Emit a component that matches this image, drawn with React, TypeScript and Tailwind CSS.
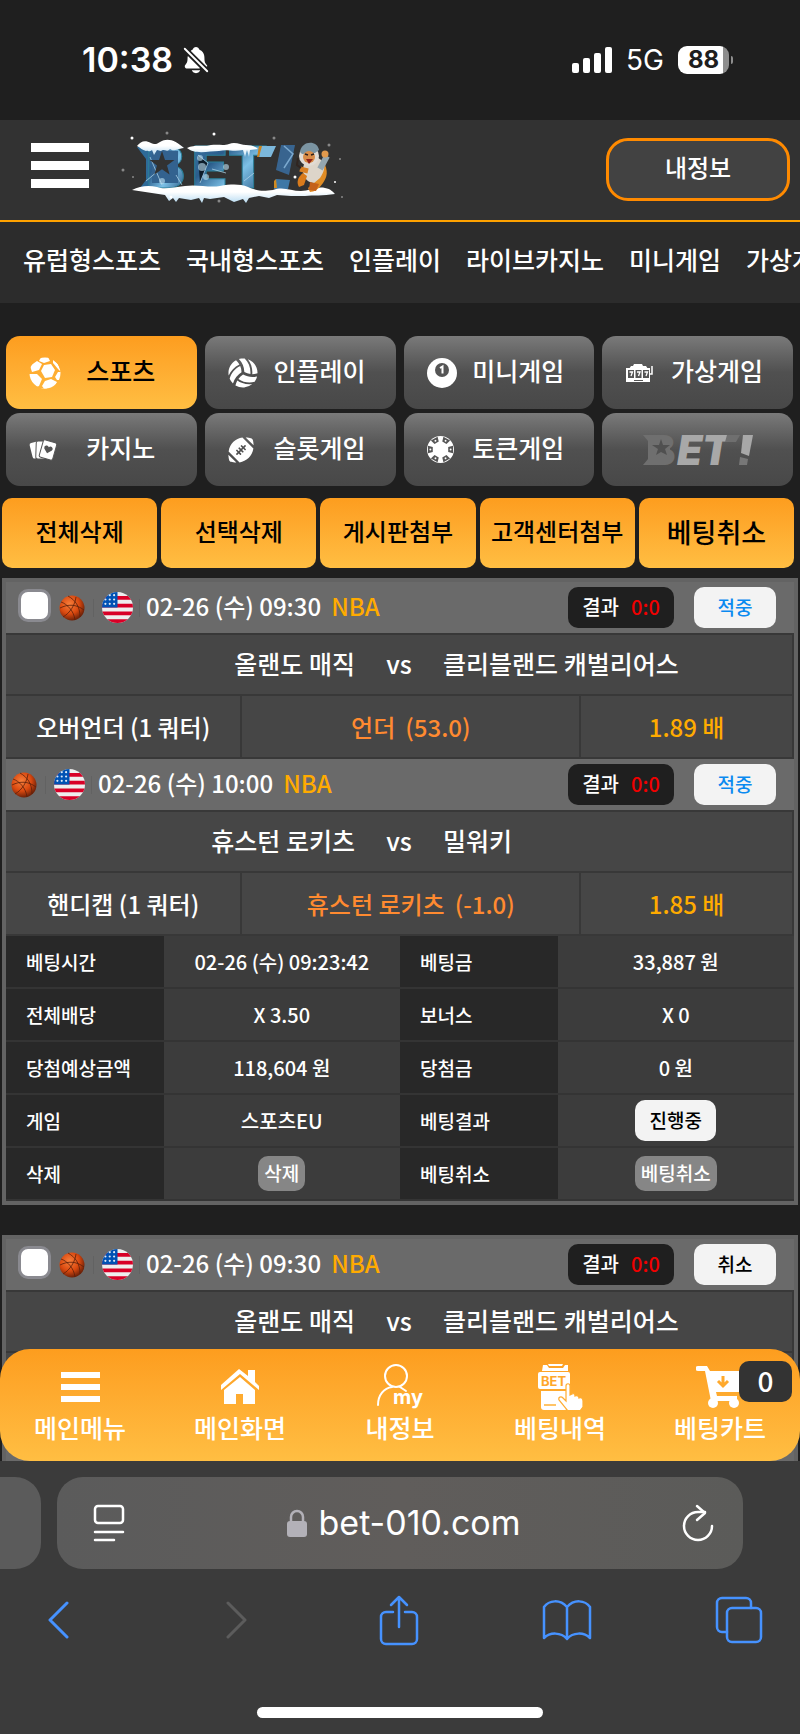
import React from 'react';
import { FaFootballBall, FaVolleyballBall } from 'react-icons/fa';
import { IoNotificationsOff } from 'react-icons/io5';

interface Match {
  id: string;
  time: string;
  league: string;
  score: string;
  status: string;
  won: boolean;
  home: string;
  away: string;
  bet?: { type: string; pick: string; line: string; odds: string };
}

const NAV_ITEMS = ['유럽형스포츠', '국내형스포츠', '인플레이', '라이브카지노', '미니게임', '가상게임'];

const ACTIONS = ['전체삭제', '선택삭제', '게시판첨부', '고객센터첨부', '베팅취소'];

const FIRST_SLIP: Match[] = [
  {
    id: 'a1',
    time: '02-26 (수) 09:30',
    league: 'NBA',
    score: '0:0',
    status: '적중',
    won: true,
    home: '올랜도 매직',
    away: '클리블랜드 캐벌리어스',
    bet: { type: '오버언더 (1 쿼터)', pick: '언더', line: '(53.0)', odds: '1.89 배' },
  },
  {
    id: 'a2',
    time: '02-26 (수) 10:00',
    league: 'NBA',
    score: '0:0',
    status: '적중',
    won: true,
    home: '휴스턴 로키츠',
    away: '밀워키',
    bet: { type: '핸디캡 (1 쿼터)', pick: '휴스턴 로키츠', line: '(-1.0)', odds: '1.85 배' },
  },
];

const SECOND_SLIP: Match[] = [
  {
    id: 'b1',
    time: '02-26 (수) 09:30',
    league: 'NBA',
    score: '0:0',
    status: '취소',
    won: false,
    home: '올랜도 매직',
    away: '클리블랜드 캐벌리어스',
  },
];

/* ---------- icons ---------- */

const SoccerIcon = () => (
  <svg viewBox="0 0 32 32" className="size-[32px]">
    <defs>
      <clipPath id="soccer-round">
        <circle cx="16" cy="16" r="15.500" />
      </clipPath>
    </defs>
    <g clipPath="url(#soccer-round)" fill="#fff">
      <path d="M15 8l7-1 4 6-3 7-7 1-4-7z" />
      <path d="M12 0l7 0 2 4-6 2-5-2z" />
      <path d="M8 4l5 3-3 6-7 2-2-6z" />
      <path d="M0 17h8l5 5-3 7-5 2-5-6z" />
      <path d="M16 24l6-2 6 3-4 8h-8l-3-4z" />
      <path d="M24 3l5 4 3 8-3-3-5-6z" />
      <path d="M29 15l3 0v8l-4 0-2-3z" />
      <path d="M12 31h6v2h-6z" />
    </g>
  </svg>
);

const BilliardIcon = () => (
  <svg viewBox="0 0 30 30" className="size-[30px]">
    <circle cx="15" cy="15" r="15" fill="#fff" />
    <circle cx="15" cy="12" r="7" fill="#555" />
    <path d="M13 10l2.500-1.500v7" fill="none" stroke="#fff" strokeWidth="2" />
  </svg>
);

const SlotIcon = () => (
  <svg viewBox="0 0 28 20" className="w-[28px]">
    <path d="M6 3h2l1-2h8l1 2h3l2 3H4z" fill="#fff" />
    <path d="M1 5h24v14H1z" fill="#fff" />
    <path d="M27 3v8h-2" stroke="#fff" strokeWidth="1.500" fill="none" />
    <g fill="#555">
      <rect x="3" y="7" width="6" height="8" />
      <rect x="10.500" y="7" width="6" height="8" />
      <rect x="18" y="7" width="6" height="8" />
      <rect x="9" y="17" width="9" height="1" />
    </g>
    <g stroke="#fff" strokeWidth="1.300" fill="none">
      <path d="M4.500 9h3l-1.500 4M12 9h3l-1.500 4M19.500 9h3L21 13" />
    </g>
  </svg>
);

const CardsIcon = () => (
  <svg viewBox="0 0 28 22" className="w-[28px]">
    <rect x="2" y="3" width="10" height="16" rx="2" fill="#fff" transform="rotate(-14 7 11)" />
    <rect x="7" y="2" width="10" height="18" rx="2" fill="#fff" stroke="#555" strokeWidth="1" transform="rotate(2 12 11)" />
    <g transform="rotate(16 19 11)">
      <rect x="12" y="2" width="14" height="18" rx="2" fill="#fff" stroke="#555" strokeWidth="1" />
      <path d="M19 14.500l-4-4a2.300 2.300 0 0 1 4-2.300 2.300 2.300 0 0 1 4 2.300z" fill="#555" />
    </g>
  </svg>
);

const ChipIcon = () => (
  <svg viewBox="0 0 28 28" className="w-[27px]">
    <circle cx="14" cy="14" r="14" fill="#fff" />
    {[0, 60, 120, 180, 240, 300].map((deg) => (
      <g key={deg} transform={`rotate(${deg + 30} 14 14)`}>
        <path d="M10 1l1.500 5h5L18 1z" fill="#555" />
        <circle cx="14" cy="3.500" r="1" fill="#fff" />
      </g>
    ))}
  </svg>
);

const GreyLogo = () => (
  <svg viewBox="0 0 112 32" className="w-[112px] overflow-visible" fontFamily="Inter, sans-serif" fontWeight="900" fontSize="41">
    <text x="6" y="31" fill="#6f6f6f">B</text>
    <path d="M10 6h18v20H10z" fill="#6f6f6f" />
    <path d="M1 1h9v30H1l5-6V7z" fill="#6f6f6f" />
    <text x="35 60" y="31" fill="#a8a8a8" fontStyle="italic">ET</text>
    <path d="M85 1h13l-4 7H83z" fill="#6f6f6f" />
    <path d="M101 1h10l-4 21-8-3z" fill="#a8a8a8" />
    <path d="M98 23l8 2-1 6h-8z" fill="#777" />
    <path d="M19 5l2 6 7 0-5 4 2 6-6-3-5 3 2-6-6-4 7 0z" fill="#505050" />
  </svg>
);

const IceLogo = () => (
  <svg viewBox="0 0 226 76" className="w-[226px] overflow-visible">
    <defs>
      <linearGradient id="ice" x1="0" y1="0" x2="1" y2="1">
        <stop offset="0" stopColor="#3f7cab" />
        <stop offset="0.350" stopColor="#2b5d8c" />
        <stop offset="0.600" stopColor="#7cc0e6" />
        <stop offset="1" stopColor="#173e6b" />
      </linearGradient>
      <linearGradient id="snow" x1="0" y1="0" x2="0" y2="1">
        <stop offset="0.400" stopColor="#fff" />
        <stop offset="1" stopColor="#b9dcf2" />
      </linearGradient>
    </defs>
    <path d="M17 16h14v41H20l6-8V28z" fill="#2e6a98" />
    <g fontFamily="Inter, sans-serif" fontWeight="900" fontSize="58" fill="url(#ice)" stroke="#2a7f98" strokeWidth="1">
      <text x="26" y="57">B</text>
      <text x="72 108" y="57">ET</text>
    </g>
    <path d="M32 20h26v32H32z" fill="#33628f" />
    <path d="M142 15h14l-5 11h-12z" fill="#7cb8dc" />
    <path d="M139 15h3l-3 11h-2z" fill="#c98320" />
    <path d="M161 14h14l-6 30-13-5z" fill="#38648f" />
    <path d="M164 15l9 8-9 14" fill="none" stroke="#7ba9cf" strokeWidth="1.500" />
    <path d="M156 48l14 1-2 9h-14z" fill="#3f78a6" />
    <path d="M154 50l2-2 1 9h-3z" fill="#d18b22" />
    <path d="M30 26l12 28M26 50l12-10M78 24l10 8-8 20M124 50l10-8M92 38l14 4M56 44l6 10" stroke="#b7dcf0" strokeWidth="1" opacity="0.700" />
    <g fill="#bfe3f5" opacity="0.600">
      <circle cx="82" cy="36" r="4" />
      <circle cx="86" cy="46" r="3" />
      <circle cx="80" cy="27" r="3" />
      <circle cx="42" cy="50" r="3" />
      <circle cx="106" cy="36" r="3" />
    </g>
    <path d="M42 20l3 9 9.400 0-7.400 5.600 2.600 8.900-7.600-5.200-7.600 5.200 2.600-8.900-7.400-5.600 9.400 0z" fill="#323232" />
    <path d="M17 15c4-5 8-6 14-3 4 2 6 1 9-1 8-5 16-1 24 6-8 1-10 4-14 1-3 4-6-1-9 2l-4-1-3 5-2-5c-4 3-3 0-6 1-4-1-5-3-9-5z" fill="url(#snow)" />
    <path d="M67 17c8-4 16-1 24-3 8-1 12 1 18-1 6-3 12 1 17 1 4 0 9 1 12 4l-8 1-1 7-2-7-2 7-2-7c-10 2-16-1-24 1-10 0-24 4-32-3z" fill="url(#snow)" />
    <path d="M12 59c8-4 16-5 25-3 8 3 16 0 28-1 12-2 24 2 35 0 12-2 20-2 28 1 12 5 16 4 25 3 10-4 18 1 28 1 8 0 16-5 24-3 6 1 8 4 10 6-12 2-22 1-30 2l-14 0-14-1-8 3-10-2-10 2-3 5-3-4-9 3-10-5-14 2-6-1-2 5-3-5-8 2-12-2-3 4-3-4-4 3-4-6z" fill="url(#snow)" />
    {/* mascot */}
    <ellipse cx="194" cy="39" rx="11" ry="13" fill="#ddd5ca" />
    <path d="M200 47c4-6 6-12 3-18 6 12 4 17 0 23-4 6-9 9-13 9l-2-4z" fill="#e08c25" />
    <path d="M183 42c-5 4-7 9-4 14l5-2 3-9z" fill="#d97b1c" />
    <path d="M190 51l9 2-3 7-7-1z" fill="#c4611a" />
    <circle cx="189" cy="25" r="10" fill="#e1dbd4" />
    <path d="M180 21c1-11 17-13 19-2l-4 3-13 1z" fill="#7b94a2" />
    <circle cx="189" cy="26" r="6" fill="#d98c48" />
    <path d="M185 23l3 1M191 24l3-1" stroke="#2d211c" strokeWidth="1.500" />
    <path d="M186 28h7l-4 5z" fill="#8e2118" />
    <path d="M200 38l7-13" stroke="#94a6b0" strokeWidth="6" />
    <circle cx="205" cy="23" r="3.500" fill="#e29a4d" />
    <path d="M180 38l8 2" stroke="#d98126" strokeWidth="5" />
    <path d="M178 27l-1 7 4 3" stroke="#302520" strokeWidth="2" fill="none" />
    <g fill="#fff">
      <circle cx="12" cy="7" r="1.500" />
      <circle cx="94" cy="3" r="1.500" />
      <circle cx="51" cy="66" r="1.500" />
      <circle cx="215" cy="51" r="1" />
      <circle cx="175" cy="46" r="1.500" />
    </g>
    <g fill="#888">
      <circle cx="3" cy="39" r="1.500" />
      <circle cx="47" cy="2" r="1.500" />
      <circle cx="154" cy="7" r="1.500" />
      <circle cx="209" cy="14" r="1.500" />
      <circle cx="220" cy="28" r="1" />
      <circle cx="99" cy="70" r="1.500" />
      <circle cx="222" cy="66" r="1" />
      <circle cx="13" cy="46" r="1" />
    </g>
  </svg>
);

const Basketball = () => (
  <svg viewBox="0 0 26 26" className="size-[26px] shrink-0">
    <defs>
      <radialGradient id="ball" cx="0.400" cy="0.350" r="0.650">
        <stop offset="0" stopColor="#f8803c" />
        <stop offset="0.600" stopColor="#d9480f" />
        <stop offset="1" stopColor="#6f2208" />
      </radialGradient>
    </defs>
    <circle cx="13" cy="13" r="12.500" fill="url(#ball)" />
    <path d="M1 13c8-4 16-4 24 2M9 1c7 4 12 10 12 21M17 2C16 10 11 18 4 22M2 7c6 2 13 9 14 18" fill="none" stroke="#5a1f0a" strokeWidth="0.800" />
  </svg>
);

const UsFlag = () => (
  <svg viewBox="0 0 512 512" className="size-[31px] shrink-0">
    <defs>
      <clipPath id="flag-round">
        <circle cx="256" cy="256" r="256" />
      </clipPath>
    </defs>
    <g clipPath="url(#flag-round)">
      <path d="M0 0h512v512H0z" fill="#eee" />
      <path d="M0 64h512v64H0zM0 192h512v64H0zM0 320h512v64H0zM0 448h512v64H0z" fill="#d80027" />
      <path d="M0 0h256v256H0z" fill="#0052b4" />
      <g fill="#dce8f6">
        {[40, 112, 184].map((y) =>
          [40, 112, 184].map((x) => <circle key={`${x}-${y}`} cx={x + 16} cy={y + 12} r="18" />)
        )}
      </g>
    </g>
  </svg>
);

const HomeIcon = () => (
  <svg viewBox="0 0 38 36" className="w-[38px]" fill="#fff">
    <path d="M27 1h7v12l4 4v4L19 5 0 21v-5L18 0l9 7z" />
    <path d="M3 21L19 8l15 13v14H22V25h-7v10H3z" />
  </svg>
);

const MyIcon = () => (
  <svg viewBox="0 0 48 48" className="w-[48px] overflow-visible" fill="none" stroke="#fff" strokeWidth="2" strokeLinecap="round">
    <circle cx="20" cy="13" r="11" />
    <path d="M2 42c0-10 6-17 14-18M24 24l6 4" />
    <text x="17" y="41" fill="#fff" stroke="none" fontFamily="Inter, sans-serif" fontWeight="700" fontSize="20">my</text>
  </svg>
);

const BetIcon = () => (
  <svg viewBox="0 0 46 46" className="w-[46px]">
    <path d="M6 1h4l2 3h14l2-3h3v6H5z" fill="#fff" />
    <path d="M11 0h15l-1 2H12z" fill="#fff" />
    <rect x="1" y="8" width="32" height="17" rx="2" fill="#fff" />
    <text x="4" y="22" fill="#ffa72a" fontFamily="Inter, sans-serif" fontWeight="700" fontSize="13">BET</text>
    <path d="M4 27h26v17a2 2 0 0 1-2 2H7a3 3 0 0 1-3-3z" fill="#fff" />
    <path d="M7 41h12" stroke="#ffb034" strokeWidth="1.500" />
    <path
      d="M29 22c0-3 4-3 4 0v9l2-1c2-1 3 0 3 2 2-1 4 0 4 2 2-1 4 0 4 3v6l-3 4H31l-9-11c-1-3 2-4 4-2l3 3z"
      fill="#fff"
      stroke="#ffac30"
      strokeWidth="1.200"
    />
  </svg>
);

const CartIcon = () => (
  <svg viewBox="0 0 48 44" className="w-[48px]" fill="#fff">
    <path d="M2 1h9l3 5h34l-4 21H20l1 4h20v5H15L9 6H2a2 2 0 0 1 0-5z" />
    <circle cx="17" cy="38" r="5" />
    <circle cx="38" cy="38" r="5" />
    <path d="M27 11v8M22 16l5 5 5-5" fill="none" stroke="#ffa92c" strokeWidth="3" />
  </svg>
);

const MenuBars = ({ className }: { className: string }) => (
  <svg viewBox="0 0 58 45" className={className} fill="#fff" preserveAspectRatio="none">
    <path d="M0 0h58v9H0zM0 18h58v9H0zM0 36h58v9H0z" />
  </svg>
);

/* ---------- page parts ---------- */

const StatusBar = () => (
  <div className="flex h-[120px] shrink-0 items-center justify-between bg-[#1f1f1f] pl-[82px] pr-[67px] font-['Inter',sans-serif] font-normal">
    <div className="flex items-center gap-2">
      <span className="text-[34px] leading-none font-semibold">10:38</span>
      <IoNotificationsOff className="size-[30px]" />
    </div>
    <div className="flex items-center gap-3.5">
      <svg viewBox="0 0 40 26" className="w-[40px]" fill="#fff">
        <rect x="0" y="16" width="7" height="10" rx="2" />
        <rect x="11" y="11" width="7" height="15" rx="2" />
        <rect x="22" y="6" width="7" height="20" rx="2" />
        <rect x="33" y="0" width="7" height="26" rx="2" />
      </svg>
      <span className="text-[28px] leading-none">5G</span>
      <div className="flex items-center gap-0.5">
        <div className="flex h-7 w-[51px] items-center justify-center rounded-[9px] bg-linear-to-r from-white from-88% to-[#8e8e8e] to-88% text-2xl leading-none font-bold text-[#1f1f1f]">
          88
        </div>
        <div className="h-2 w-0.5 rounded-r bg-[#8e8e8e]" />
      </div>
    </div>
  </div>
);

const Header = () => (
  <header className="flex h-[102px] items-center justify-between border-b-2 border-[#ffa200] bg-[#323232] pb-0.5 pl-[31px] pr-2.5">
    <div className="flex items-center gap-[31px]">
      <button aria-label="메뉴" className="pb-2">
        <MenuBars className="h-[45px] w-[58px]" />
      </button>
      <a href="#" aria-label="BET!">
        <IceLogo />
      </a>
    </div>
    <button className="h-[63px] w-[184px] rounded-[22px] border-3 border-[#ff8a00] bg-[#424242] pb-1 text-2xl leading-none">내정보</button>
  </header>
);

const categoryBase = 'grid h-[73px] grid-cols-[30px_1fr] items-center rounded-[14px] pl-[23px] pr-3.5 text-[25px] leading-none';
const categoryGrey = 'bg-linear-to-b from-[#7a7a7a] via-[#505050] via-50% to-[#484848]';
const orange = 'bg-linear-to-b from-[#fd9d1e] to-[#ffbe42]';

const CATEGORIES = [
  { label: '스포츠', icon: <SoccerIcon />, active: true },
  { label: '인플레이', icon: <FaVolleyballBall className="size-[30px]" /> },
  { label: '미니게임', icon: <BilliardIcon /> },
  { label: '가상게임', icon: <SlotIcon /> },
  { label: '카지노', icon: <CardsIcon /> },
  { label: '슬롯게임', icon: <FaFootballBall className="size-[26px]" /> },
  { label: '토큰게임', icon: <ChipIcon /> },
];

const Categories = () => (
  <div className="grid grid-cols-4 gap-x-2 gap-y-1 pr-[7px] pl-1.5">
    {CATEGORIES.map((c) => (
      <button key={c.label} className={`${categoryBase} ${c.active ? `${orange} text-black` : categoryGrey}`}>
        {c.icon}
        <span className="pb-1">{c.label}</span>
      </button>
    ))}
    <button aria-label="BET!" className={`flex h-[73px] items-center justify-center rounded-[14px] ${categoryGrey}`}>
      <GreyLogo />
    </button>
  </div>
);

const MatchBlock = ({ match, selectable }: { match: Match; selectable: boolean }) => (
  <div>
    <div className={`flex h-[53px] items-center border-b-2 border-[#383838] bg-[#6a6a6a] pr-[18px] ${selectable ? 'pl-3' : 'pl-[5px]'}`}>
      {selectable && (
        <input
          type="checkbox"
          aria-label={`${match.home} 선택`}
          className="mr-2 mb-1 size-[33px] appearance-none rounded-[10px] border-3 border-[#8a8a90] bg-white"
        />
      )}
      <div className="flex items-center">
        <Basketball />
        <span className="mx-2 h-[18px] w-px bg-[#626262]" />
        <UsFlag />
        <span className="mx-1.5 h-[18px] w-px bg-[#626262]" />
        <span className="flex gap-2.5 pb-1 text-2xl leading-none">
          {match.time}
          <span className="text-[#ffab00]">{match.league}</span>
        </span>
      </div>
      <div className="ml-auto flex items-center gap-5 leading-none">
        <div className="flex h-[41px] w-[106px] items-center justify-center gap-3 rounded-[10px] bg-[#1f1f1f] pb-0.5 text-xl leading-none">
          결과 <span className="text-[#f00000]">{match.score}</span>
        </div>
        <div
          className={`flex h-[41px] w-[82px] items-center justify-center rounded-[10px] bg-[#f3f3f3] pb-0.5 text-[19px] font-medium ${
            match.won ? 'text-[#0a8af0]' : 'text-black'
          }`}
        >
          {match.status}
        </div>
      </div>
    </div>
    <div className="grid h-[61px] grid-cols-[1fr_88px_1fr] items-center border-r-2 border-b-2 border-[#383838] bg-[#464646] pb-0.5 text-[25px] leading-none">
      <span className="text-right">{match.home}</span>
      <span className="text-center">vs</span>
      <span>{match.away}</span>
    </div>
    <div className="grid h-[63px] grid-cols-[30fr_43fr_27fr] border-b-2 border-[#383838] bg-[#464646] text-2xl leading-none">
      <div className="flex items-center justify-center border-r-2 border-[#383838]">{match.bet?.type}</div>
      <div className="flex items-center justify-center gap-2.5 border-r-2 border-[#383838] text-[#ff8a30]">
        <span>{match.bet?.pick}</span>
        <span>{match.bet?.line}</span>
      </div>
      <div className="flex items-center justify-center border-r-2 border-[#383838] text-[#ffab00]">{match.bet?.odds}</div>
    </div>
  </div>
);

const greyPill = 'h-[35px] rounded-[10px] bg-[#868686] px-1.5 pb-0.5 align-middle text-[19px] leading-none';

const SlipDetails = () => {
  const rows: [string, React.ReactNode, string, React.ReactNode][] = [
    ['베팅시간', '02-26 (수) 09:23:42', '베팅금', '33,887 원'],
    ['전체배당', 'X 3.50', '보너스', 'X 0'],
    ['당첨예상금액', '118,604 원', '당첨금', '0 원'],
    [
      '게임',
      '스포츠EU',
      '베팅결과',
      <span className="inline-flex h-[41px] w-[81px] items-center justify-center rounded-[10px] bg-[#f3f3f3] pb-0.5 align-middle text-[19px] text-black">
        진행중
      </span>,
    ],
    ['삭제', <button className={greyPill}>삭제</button>, '베팅취소', <button className={greyPill}>베팅취소</button>],
  ];

  return (
    <table className="w-full table-fixed border-separate border-spacing-0 text-xl leading-none">
      <colgroup>
        <col className="w-[20%]" />
        <col className="w-[30%]" />
        <col className="w-[20%]" />
        <col className="w-[30%]" />
      </colgroup>
      <tbody>
        {rows.map(([leftLabel, leftValue, rightLabel, rightValue]) => (
          <tr key={leftLabel} className="h-[53px] [&>*]:border-b-2 [&>*]:border-[#343434] [&>*]:p-0">
            <th className="bg-[#282828] text-left text-[19px] font-medium">
              <span className="pl-5">{leftLabel}</span>
            </th>
            <td className="bg-[#3c3c3c] text-center">{leftValue}</td>
            <th className="bg-[#282828] text-left text-[19px] font-medium">
              <span className="pl-5">{rightLabel}</span>
            </th>
            <td className="bg-[#3c3c3c] text-center">{rightValue}</td>
          </tr>
        ))}
      </tbody>
    </table>
  );
};

const TabBar = () => {
  const tabs = [
    { label: '메인메뉴', icon: <MenuBars className="h-[30px] w-[39px]" /> },
    { label: '메인화면', icon: <HomeIcon /> },
    { label: '내정보', icon: <MyIcon /> },
    { label: '베팅내역', icon: <BetIcon /> },
    { label: '베팅카트', icon: <CartIcon />, badge: '0' },
  ];

  return (
    <nav className={`absolute inset-x-0 bottom-0 grid h-28 grid-cols-5 rounded-[30px] ${orange}`}>
      {tabs.map((tab) => (
        <a key={tab.label} href="#" className="relative flex flex-col items-center pt-3.5 text-[25px] leading-none">
          <span className="flex h-12 items-center">{tab.icon}</span>
          <span className="pt-1">{tab.label}</span>
          {tab.badge && (
            <span className="absolute top-3 right-2 flex h-[41px] w-[53px] items-center justify-center rounded-[10px] bg-[#333] pb-1 text-[28px] leading-none">
              {tab.badge}
            </span>
          )}
        </a>
      ))}
    </nav>
  );
};

const stroke = { fill: 'none', strokeWidth: 3, strokeLinecap: 'round', strokeLinejoin: 'round' } as const;

const BrowserBar = () => (
  <footer className="shrink-0 bg-[#3b3b3b] pt-4 pb-4 font-['Inter',sans-serif] font-normal">
    <div className="flex items-center gap-4 pr-[57px]">
      <div className="h-[92px] w-[41px] rounded-r-[26px] bg-[#5b5b5b]" />
      <div className="flex h-[92px] flex-1 items-center justify-between rounded-[26px] bg-linear-to-r from-[#5b5b5b] via-[#605d5b] to-[#5b5b59] pr-[29px] pl-9">
        <button aria-label="읽기 도구">
          <svg viewBox="0 0 32 38" className="w-[32px]" stroke="#fff" {...stroke} strokeWidth="2.500">
            <rect x="2" y="2" width="28" height="17" rx="3" />
            <path d="M2 28h28M2 36h19" />
          </svg>
        </button>
        <div className="flex items-center gap-3 text-[34px] leading-none">
          <svg viewBox="0 0 20 28" className="w-[20px]">
            <rect x="0" y="12" width="20" height="16" rx="3" fill="#b3b1b8" />
            <path d="M4 12V8a6 6 0 0 1 12 0v4" fill="none" stroke="#b3b1b8" strokeWidth="2.500" />
          </svg>
          <span>bet-010.com</span>
        </div>
        <button aria-label="새로고침">
          <svg viewBox="0 0 32 38" className="w-[32px]" stroke="#fff" {...stroke} strokeWidth="2.500">
            <path d="M30 22A14 14 0 1 1 16 8h7" />
            <path d="M15 2l8 7-8 7" />
          </svg>
        </button>
      </div>
    </div>
    <div className="mt-5 flex h-[62px] items-center justify-between pr-[37px] pl-12 text-[#4692ff]">
      <button aria-label="뒤로">
        <svg viewBox="0 0 22 38" className="w-[22px]" stroke="currentColor" {...stroke}>
          <path d="M19 2L2 19l17 17" />
        </svg>
      </button>
      <button aria-label="앞으로" className="ml-8 text-[#5c5c5c]">
        <svg viewBox="0 0 22 38" className="w-[22px]" stroke="currentColor" {...stroke}>
          <path d="M3 2l17 17L3 36" />
        </svg>
      </button>
      <button aria-label="공유" className="ml-2">
        <svg viewBox="0 0 40 52" className="w-[40px]" stroke="currentColor" {...stroke} strokeWidth="2.500">
          <path d="M14 18H7a5 5 0 0 0-5 5v22a5 5 0 0 0 5 5h26a5 5 0 0 0 5-5V23a5 5 0 0 0-5-5h-7M20 33V3M12 11l8-8 8 8" />
        </svg>
      </button>
      <button aria-label="책갈피">
        <svg viewBox="0 0 50 42" className="w-[50px]" stroke="currentColor" {...stroke} strokeWidth="2.500">
          <path d="M25 8C18 0 7 1 2 8v31c6-6 17-6 23 1 6-7 17-7 23-1V8c-5-7-16-8-23 0zM25 8v31" />
        </svg>
      </button>
      <button aria-label="탭">
        <svg viewBox="0 0 48 48" className="w-[48px]" stroke="currentColor" {...stroke} strokeWidth="2.500">
          <path d="M12 36H7a5 5 0 0 1-5-5V7a5 5 0 0 1 5-5h24a5 5 0 0 1 5 5v5" />
          <rect x="12" y="12" width="34" height="34" rx="5" />
        </svg>
      </button>
    </div>
    <div className="mx-auto mt-14 h-[11px] w-[286px] rounded-full bg-white" />
  </footer>
);

export default function App() {
  return (
    <div className="flex h-screen flex-col overflow-hidden bg-[#1f1f1f] font-['Noto_Sans_CJK_KR',sans-serif] font-medium text-white">
      <StatusBar />
      <main className="relative min-h-0 flex-1 overflow-hidden">
        <Header />
        <nav className="flex h-[81px] items-center gap-[25px] overflow-hidden bg-[#2c2c2c] pb-1.5 pl-[23px] text-[25px] leading-none whitespace-nowrap">
          {NAV_ITEMS.map((item) => (
            <a key={item} href="#">
              {item}
            </a>
          ))}
        </nav>

        <div className="pt-[33px]">
          <Categories />
          <div className="mt-3 grid grid-cols-5 gap-1 pr-1.5 pl-0.5">
            {ACTIONS.map((action) => (
              <button
                key={action}
                className={`h-[70px] rounded-[10px] pb-1 leading-none whitespace-nowrap text-black ${orange} ${
                  action === '베팅취소' ? 'text-[27px]' : 'text-2xl'
                }`}
              >
                {action}
              </button>
            ))}
          </div>
        </div>

        <section className="mx-0.5 mt-2.5 border-4 border-[#636363]">
          {FIRST_SLIP.map((m, i) => (
            <MatchBlock key={m.id} match={m} selectable={i === 0} />
          ))}
          <SlipDetails />
        </section>

        <section className="mx-0.5 mt-[30px] border-4 border-[#636363] bg-[#6a6a6a] pb-16">
          {SECOND_SLIP.map((m, i) => (
            <MatchBlock key={m.id} match={m} selectable={i === 0} />
          ))}
        </section>

        <TabBar />
      </main>
      <BrowserBar />
    </div>
  );
}
